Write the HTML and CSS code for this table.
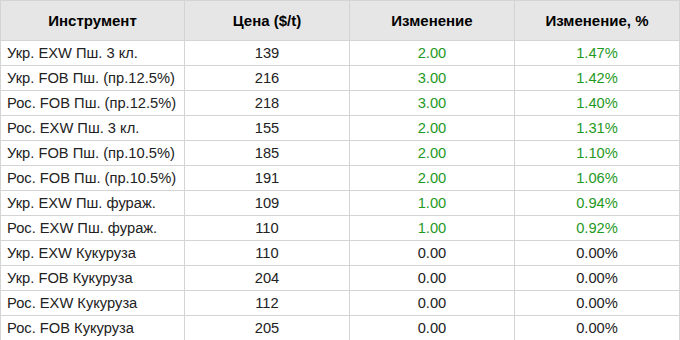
FILE: index.html
```html
<!DOCTYPE html>
<html lang="ru">
<head>
<meta charset="utf-8">
<link rel="stylesheet" href="styles.css">
</head>
<body>
<table class="quotes">
  <colgroup>
    <col class="c1"><col class="c2"><col class="c3"><col class="c4">
  </colgroup>
  <thead>
    <tr><th>Инструмент</th><th>Цена ($/t)</th><th>Изменение</th><th>Изменение, %</th></tr>
  </thead>
  <tbody>
    <tr><td class="name">Укр. EXW Пш. 3 кл.</td><td>139</td><td class="up">2.00</td><td class="up">1.47%</td></tr>
    <tr><td class="name">Укр. FOB Пш. (пр.12.5%)</td><td>216</td><td class="up">3.00</td><td class="up">1.42%</td></tr>
    <tr><td class="name">Рос. FOB Пш. (пр.12.5%)</td><td>218</td><td class="up">3.00</td><td class="up">1.40%</td></tr>
    <tr><td class="name">Рос. EXW Пш. 3 кл.</td><td>155</td><td class="up">2.00</td><td class="up">1.31%</td></tr>
    <tr><td class="name">Укр. FOB Пш. (пр.10.5%)</td><td>185</td><td class="up">2.00</td><td class="up">1.10%</td></tr>
    <tr><td class="name">Рос. FOB Пш. (пр.10.5%)</td><td>191</td><td class="up">2.00</td><td class="up">1.06%</td></tr>
    <tr><td class="name">Укр. EXW Пш. фураж.</td><td>109</td><td class="up">1.00</td><td class="up">0.94%</td></tr>
    <tr><td class="name">Рос. EXW Пш. фураж.</td><td>110</td><td class="up">1.00</td><td class="up">0.92%</td></tr>
    <tr><td class="name">Укр. EXW Кукуруза</td><td>110</td><td>0.00</td><td>0.00%</td></tr>
    <tr><td class="name">Укр. FOB Кукуруза</td><td>204</td><td>0.00</td><td>0.00%</td></tr>
    <tr><td class="name">Рос. EXW Кукуруза</td><td>112</td><td>0.00</td><td>0.00%</td></tr>
    <tr><td class="name">Рос. FOB Кукуруза</td><td>205</td><td>0.00</td><td>0.00%</td></tr>
  </tbody>
</table>
</body>
</html>
```

FILE: styles.css
```css
html, body {
  margin: 0;
  padding: 0;
  background: #ffffff;
}

.quotes {
  border-collapse: collapse;
  table-layout: fixed;
  width: 679px;
  font-family: "Liberation Sans", Arial, sans-serif;
  font-size: 14.7px;
  color: #222222;
}

.c1 { width: 184px; }
.c2 { width: 165px; }
.c3 { width: 165px; }
.c4 { width: 165px; }

.quotes th,
.quotes td {
  border: 1px solid #d4d4d4;
  text-align: center;
  padding: 0 6px;
  white-space: nowrap;
}

.quotes th {
  height: 39px;
  background: #e6e6e6;
  font-weight: bold;
  font-size: 15px;
  color: #000000;
}

.quotes td {
  height: 24px;
}

.quotes td.name {
  text-align: left;
}

.quotes td.up {
  color: #1f991f;
}
```
